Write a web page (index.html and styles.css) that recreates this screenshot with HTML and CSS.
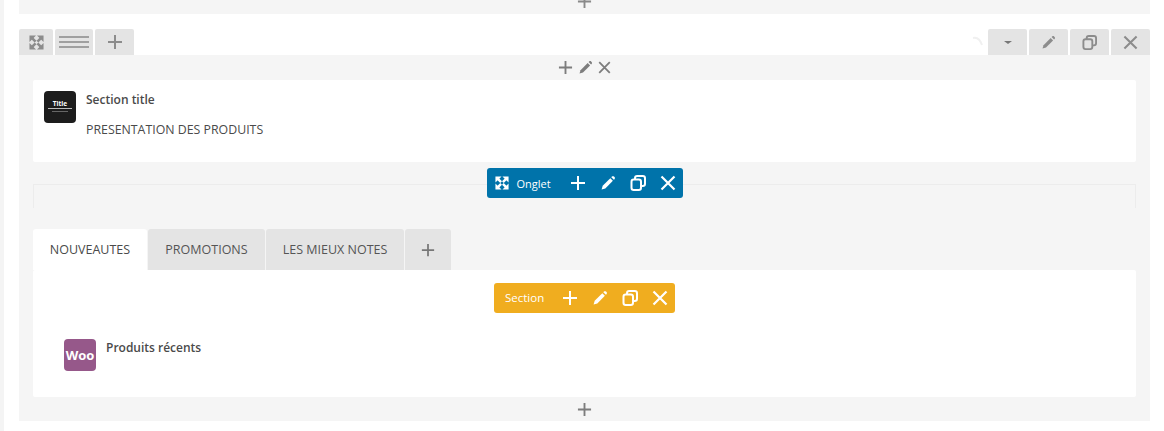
FILE: index.html
```html
<!DOCTYPE html>
<html lang="en">
    <head>
        <meta charset="UTF-8" />
        <meta name="viewport" content="width=device-width, initial-scale=1.0" />
        <title>Builder</title>
        <link rel="stylesheet" href="styles.css">
    </head>
    <body>
        <svg class="defs" width="0" height="0">
            <symbol id="i-plus" viewBox="0 0 16 16"><path d="M8 1v14M1 8h14" fill="none" stroke="currentColor" stroke-width="2"/></symbol>
            <symbol id="i-close" viewBox="0 0 16 16"><path d="M1.500 1.500l13 13M14.500 1.500l-13 13" fill="none" stroke="currentColor" stroke-width="2.200"/></symbol>
            <symbol id="i-pencil" viewBox="0 0 16 16"><path d="M10.300 3.200l2.600 2.600-7.600 7.600-3.700 1.100 1.100-3.700z" fill="currentColor"/><path d="M11.300 2.200l.6-.6c.6-.6 1.500-.6 2.100 0l.5.5c.6.6.6 1.500 0 2.100l-.6.6z" fill="currentColor"/></symbol>
            <symbol id="i-copy" viewBox="0 0 16 16"><path d="M5 4.500V3.200C5 2 6 1 7.200 1h5.600C14 1 15 2 15 3.200v5.600c0 1.200-1 2.200-2.200 2.200h-1.300" fill="none" stroke="currentColor" stroke-width="2"/><rect x="1.500" y="4.500" width="9.500" height="10.500" rx="2.200" fill="none" stroke="currentColor" stroke-width="2"/></symbol>
            <symbol id="i-expand" viewBox="0 0 16 16"><path d="M.5.5h7l-7 7zM15.500.5v7l-7-7zM15.500 15.500h-7l7-7zM.5 15.500v-7l7 7z" fill="currentColor"/><path d="M3 3l4 4M13 3L9 7M13 13L9 9M3 13l4-4" stroke="currentColor" stroke-width="2.800"/></symbol>
        </svg>

        <div class="page">
            <div class="prev-row">
                <svg class="prev-plus"><use href="#i-plus"/></svg>
            </div>

            <div class="row-bar">
                <div class="bar-group">
                    <button class="bar-btn bar-btn-move"><svg class="ico-15"><use href="#i-expand"/></svg></button>
                    <button class="bar-btn bar-btn-layout"><span class="lines"></span></button>
                    <button class="bar-btn bar-btn-add"><svg class="ico-16"><use href="#i-plus"/></svg></button>
                </div>
                <div class="bar-group">
                    <svg class="undo" viewBox="0 0 12 12"><path d="M1 2c4-1 7 1 9 7" fill="none" stroke="#f0f0f0" stroke-width="2"/></svg>
                    <button class="bar-btn bar-btn-right"><span class="caret"></span></button>
                    <button class="bar-btn bar-btn-right"><svg class="ico-15"><use href="#i-pencil"/></svg></button>
                    <button class="bar-btn bar-btn-right"><svg class="ico-15"><use href="#i-copy"/></svg></button>
                    <button class="bar-btn bar-btn-right"><svg class="ico-15"><use href="#i-close"/></svg></button>
                </div>
            </div>

            <div class="section">
                <div class="mini-tools">
                    <svg class="ico-15"><use href="#i-plus"/></svg>
                    <svg class="ico-15"><use href="#i-pencil"/></svg>
                    <svg class="ico-13"><use href="#i-close"/></svg>
                </div>

                <div class="card card-title">
                    <div class="el-icon el-icon-title">
                        <span class="title-word">Title</span>
                        <span class="title-line"></span>
                        <span class="title-line title-line-dim"></span>
                    </div>
                    <div>
                        <h3 class="el-name">Section title</h3>
                        <p class="el-value">PRESENTATION DES PRODUITS</p>
                    </div>
                </div>

                <div class="tabs-box">
                    <div class="tool tool-blue tool-over">
                        <svg class="tool-expand"><use href="#i-expand"/></svg>
                        <span class="tool-label">Onglet</span>
                        <button class="tool-btn"><svg class="ico-16"><use href="#i-plus"/></svg></button>
                        <button class="tool-btn"><svg class="ico-16"><use href="#i-pencil"/></svg></button>
                        <button class="tool-btn"><svg class="ico-16"><use href="#i-copy"/></svg></button>
                        <button class="tool-btn"><svg class="ico-16"><use href="#i-close"/></svg></button>
                    </div>
                </div>

                <div class="tabs">
                    <div class="tab tab-active">NOUVEAUTES</div>
                    <div class="tab tab-promo">PROMOTIONS</div>
                    <div class="tab tab-notes">LES MIEUX NOTES</div>
                    <div class="tab tab-add"><svg class="ico-14"><use href="#i-plus"/></svg></div>
                </div>

                <div class="card card-tab">
                    <div class="tool-wrap">
                        <div class="tool tool-orange">
                            <span class="tool-label">Section</span>
                            <button class="tool-btn"><svg class="ico-16"><use href="#i-plus"/></svg></button>
                            <button class="tool-btn"><svg class="ico-16"><use href="#i-pencil"/></svg></button>
                            <button class="tool-btn"><svg class="ico-16"><use href="#i-copy"/></svg></button>
                            <button class="tool-btn"><svg class="ico-16"><use href="#i-close"/></svg></button>
                        </div>
                    </div>
                    <div class="woo-item">
                        <div class="el-icon el-icon-woo">Woo</div>
                        <h3 class="el-name">Produits récents</h3>
                    </div>
                </div>

                <div class="bottom-add">
                    <svg class="ico-15"><use href="#i-plus"/></svg>
                </div>
            </div>
        </div>
    </body>
</html>
```

FILE: styles.css
```css
body {
    margin: 0;
    background-color: #fff;
    font-family: "Open Sans", Arial, sans-serif;
    color: #444;
    overflow: hidden;
}

.defs {
    position: absolute;
}

svg {
    display: block;
}

button {
    border: none;
    padding: 0;
    cursor: pointer;
}

.ico-13 { width: 13px; height: 13px; }
.ico-14 { width: 14px; height: 14px; }
.ico-15 { width: 15px; height: 15px; }
.ico-16 { width: 16px; height: 16px; }

.page {
    width: 1131px;
    height: 431px;
    margin-left: 4px;
    padding-left: 15px;
    box-shadow: -4px 0 0 #f4f4f4;
}

.prev-row {
    height: 14px;
    background-color: #f5f5f5;
    display: flex;
    justify-content: center;
    overflow: hidden;
}

.prev-plus {
    width: 15px;
    height: 15px;
    margin-top: -6px;
    color: #8a8a8a;
}

.row-bar {
    display: flex;
    justify-content: space-between;
    height: 26px;
    margin-top: 15px;
}

.bar-group {
    display: flex;
    align-items: center;
    gap: 2px;
}

.bar-btn {
    height: 26px;
    background-color: #e4e4e4;
    color: #8c8c8c;
    display: flex;
    align-items: center;
    justify-content: center;
    border-radius: 2px 2px 0 0;
}

.bar-btn-move { width: 34px; }
.bar-btn-layout { width: 38px; }
.bar-btn-add { width: 39px; }
.bar-btn-right { width: 39px; }

.lines {
    width: 30px;
    height: 2px;
    background-color: #a0a0a0;
    box-shadow: 0 -5px 0 #a0a0a0, 0 5px 0 #a0a0a0;
}

.caret {
    border-left: 4px solid transparent;
    border-right: 4px solid transparent;
    border-top: 3px solid #777;
}

.undo {
    width: 12px;
    height: 12px;
    margin-right: 2px;
}

.section {
    height: 366px;
    background-color: #f5f5f5;
    padding: 0 14px;
    box-sizing: border-box;
}

.mini-tools {
    height: 25px;
    display: flex;
    align-items: center;
    justify-content: center;
    gap: 5px;
    color: #7d7d7d;
}

.card {
    background-color: #fff;
    border-radius: 2px;
}

.card-title {
    height: 82px;
    box-sizing: border-box;
    padding: 11px;
    display: flex;
    gap: 10px;
}

.el-icon {
    width: 32px;
    height: 32px;
    border-radius: 4px;
    flex-shrink: 0;
}

.el-icon-title {
    background-color: #1c1c1c;
    color: #fff;
    display: flex;
    flex-direction: column;
    align-items: center;
    padding-top: 9px;
    box-sizing: border-box;
}

.title-word {
    font-size: 6.500px;
    line-height: 7px;
    font-weight: 700;
}

.title-line {
    width: 24px;
    height: 1px;
    margin-top: 1px;
    background-color: #bbb;
}

.title-line-dim {
    width: 16px;
    margin-top: 2px;
    background-color: #666;
}

.el-name {
    margin: 0;
    font-size: 12px;
    line-height: 17px;
    font-weight: 600;
    color: #4a4a4a;
}

.el-value {
    margin: 13px 0 0;
    font-size: 12.350px;
    line-height: 17px;
    color: #4a4a4a;
}

.tabs-box {
    position: relative;
    height: 24px;
    margin-top: 22px;
    box-sizing: border-box;
    border: 1px solid #ececec;
    border-bottom: none;
}

.tool {
    height: 30px;
    width: 196px;
    box-sizing: border-box;
    border-radius: 3px;
    display: flex;
    align-items: center;
    color: #fff;
}

.tool-over {
    position: absolute;
    top: -17px;
    left: 50%;
    transform: translateX(-50%);
}

.tool-blue {
    background-color: #0073aa;
    padding-left: 8px;
}

.tool-orange {
    width: 181px;
    background-color: #f0ad1f;
    padding-left: 11px;
}

.tool-expand {
    width: 14px;
    height: 14px;
    margin-right: 8px;
}

.tool-label {
    font-size: 11px;
    width: 46px;
    flex-shrink: 0;
}

.tool-orange .tool-label {
    width: 50px;
    font-size: 11.500px;
    padding-bottom: 2px;
}

.tool-btn {
    width: 30px;
    height: 30px;
    background: none;
    color: #fff;
    display: flex;
    align-items: center;
    justify-content: center;
}

.tabs {
    display: flex;
    gap: 1px;
    height: 41px;
    margin-top: 21px;
}

.tab {
    display: flex;
    align-items: center;
    justify-content: center;
    font-size: 12.500px;
    background-color: #e4e4e4;
    color: #555;
    border-radius: 3px 3px 0 0;
}

.tab-active {
    width: 114px;
    background-color: #fff;
    color: #4a4a4a;
}

.tab-promo { width: 117px; }
.tab-notes { width: 138px; }

.tab-add {
    width: 46px;
    color: #777;
}

.card-tab {
    height: 127px;
    box-sizing: border-box;
    padding-top: 13px;
}

.tool-wrap {
    display: flex;
    justify-content: center;
}

.woo-item {
    display: flex;
    gap: 10px;
    margin: 26px 0 0 31px;
}

.el-icon-woo {
    background-color: #96588a;
    color: #fff;
    font-size: 13px;
    font-weight: 700;
    line-height: 32px;
    text-align: center;
}

.bottom-add {
    height: 24px;
    display: flex;
    align-items: center;
    justify-content: center;
    color: #7d7d7d;
}
```
